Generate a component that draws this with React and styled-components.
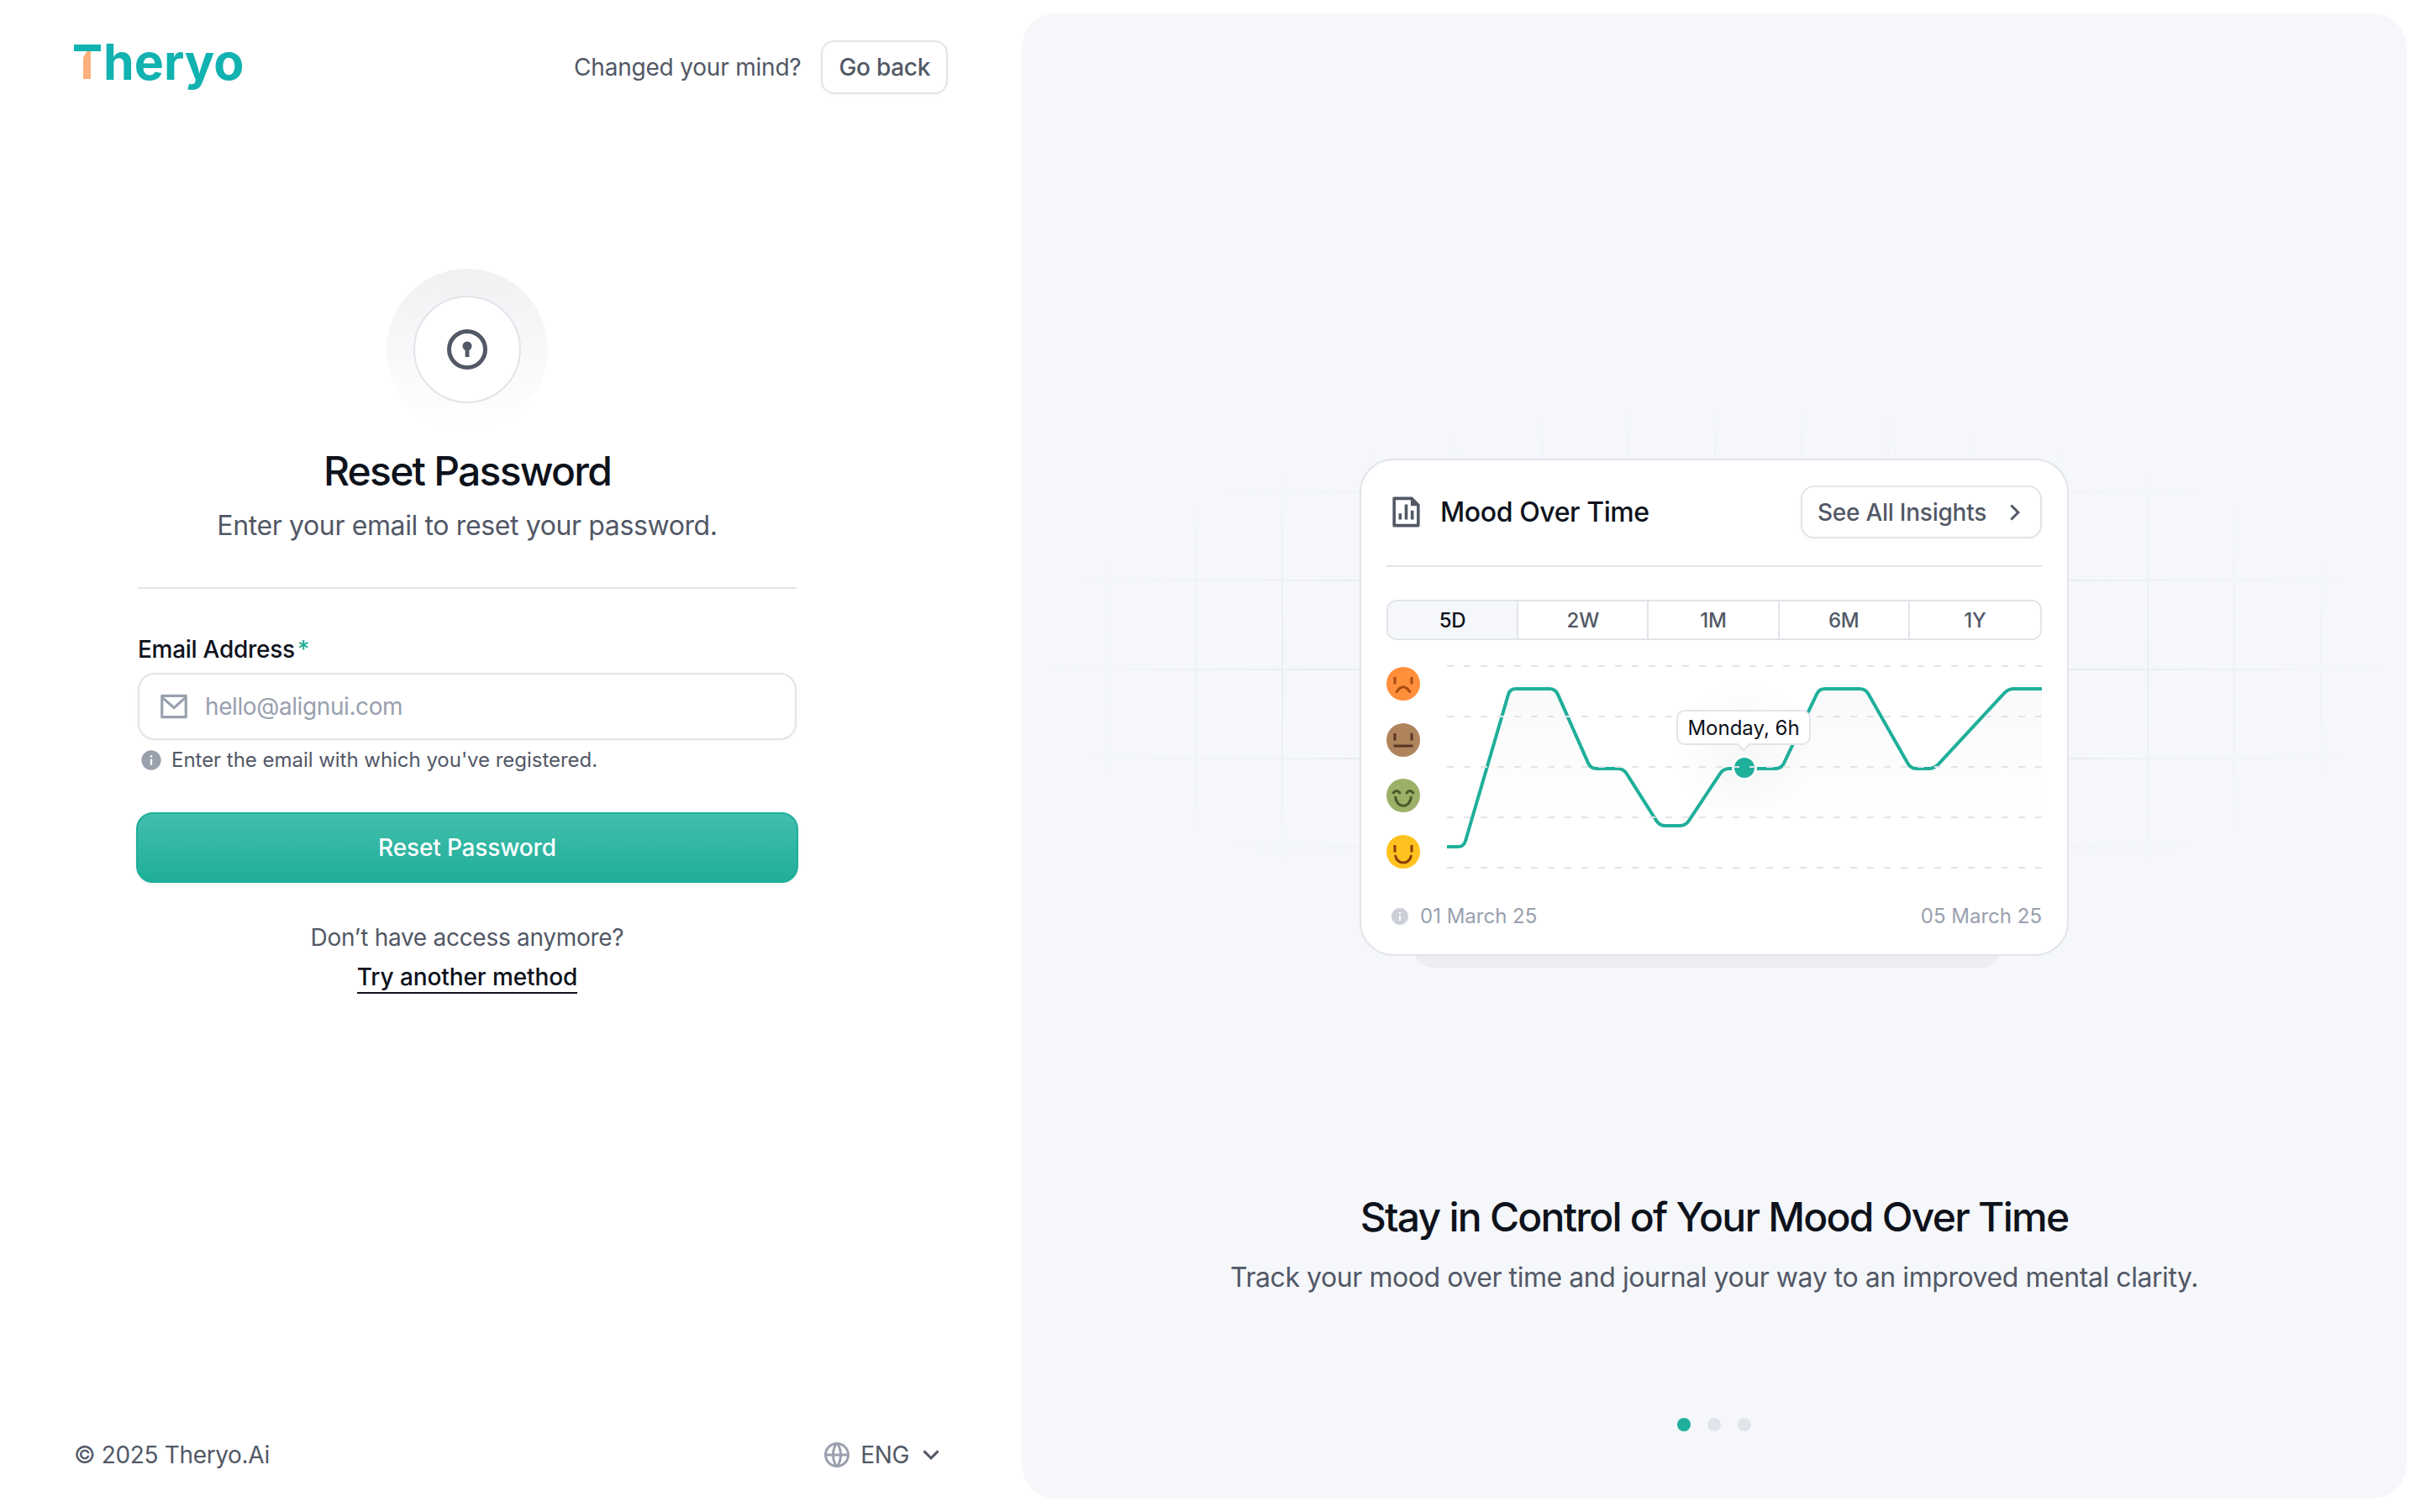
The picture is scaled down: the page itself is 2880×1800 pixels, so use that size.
import React from 'react'
import styled, { createGlobalStyle } from 'styled-components'
import {
  RiArrowDownSLine,
  RiArrowRightSLine,
  RiFileChartLine,
  RiGlobalLine,
  RiInformationFill,
  RiMailLine,
} from 'react-icons/ri'

const TEAL = '#1FAF9A'

const linePoints = [
  [1722, 1008], [1742, 1008], [1797, 820], [1851, 820], [1893, 915], [1932, 915],
  [1975, 983], [2006, 983], [2051, 915], [2120, 915], [2165, 820], [2220, 820],
  [2274, 915], [2302, 915], [2390, 820], [2430, 820],
]

// polyline with rounded corners
function roundedPath(points, r) {
  let d = `M${points[0][0]} ${points[0][1]}`
  for (let i = 1; i < points.length - 1; i++) {
    const [x, y] = points[i]
    const [px, py] = points[i - 1]
    const [nx, ny] = points[i + 1]
    const l1 = Math.hypot(x - px, y - py)
    const l2 = Math.hypot(nx - x, ny - y)
    const a = Math.min(r, l1 / 2) / l1
    const b = Math.min(r, l2 / 2) / l2
    d += ` L${x - (x - px) * a} ${y - (y - py) * a} Q${x} ${y} ${x + (nx - x) * b} ${y + (ny - y) * b}`
  }
  const last = points[points.length - 1]
  return `${d} L${last[0]} ${last[1]}`
}

const linePath = roundedPath(linePoints, 7)
const gridRows = [793, 853, 913, 973, 1033]

function Face({ bg, ink, children }) {
  return (
    <svg width='40' height='40' viewBox='0 0 40 40' fill='none' stroke={ink} strokeWidth='3'>
      <circle cx='20' cy='20' r='20' fill={bg} stroke='none' />
      {children}
    </svg>
  )
}

const Eyes = () => <path d='M10 12v8.5M30 12v8.5' />

export default function App() {
  return (
    <Page>
      <GlobalStyle />
      <LeftColumn>
        <TopBar>
          <Logo><LogoT>T</LogoT>heryo</Logo>
          <TopActions>
            <MutedText>Changed your mind?</MutedText>
            <GhostButton>Go back</GhostButton>
          </TopActions>
        </TopBar>

        <FormBlock>
          <IconHalo>
            <IconDisc>
              <svg width='48' height='48' viewBox='0 0 48 48' fill='none'>
                <circle cx='24' cy='24' r='21.5' stroke='#525866' strokeWidth='5' />
                <circle cx='24' cy='20' r='5.5' fill='#525866' />
                <rect x='21.6' y='21' width='4.8' height='12' fill='#525866' />
              </svg>
            </IconDisc>
          </IconHalo>
          <FormTitle>Reset Password</FormTitle>
          <FormSubtitle>Enter your email to reset your password.</FormSubtitle>
          <Rule />
          <FieldLabel>Email Address<Required>*</Required></FieldLabel>
          <InputBox>
            <RiMailLine size={38} color='#99A0AE' />
            <Placeholder>hello@alignui.com</Placeholder>
          </InputBox>
          <Hint>
            <RiInformationFill size={28} color='#99A0AE' />
            Enter the email with which you've registered.
          </Hint>
          <PrimaryButton>Reset Password</PrimaryButton>
          <AltText>Don’t have access anymore?</AltText>
          <AltLink>Try another method</AltLink>
        </FormBlock>

        <BottomBar>
          <FooterText>© 2025 Theryo.Ai</FooterText>
          <LangPicker>
            <RiGlobalLine size={36} color='#99A0AE' />
            <FooterText>ENG</FooterText>
            <LangChevron size={36} color='#525866' />
          </LangPicker>
        </BottomBar>
      </LeftColumn>

      <RightPanel>
        <Illustration>
          <GridBackdrop />
          <Card>
            <CardHeader>
              <CardTitle>
                <RiFileChartLine size={43} color='#525866' />
                Mood Over Time
              </CardTitle>
              <InsightsButton>
                See All Insights
                <RiArrowRightSLine size={36} color='#525866' />
              </InsightsButton>
            </CardHeader>
            <Tabs>
              {['5D', '2W', '1M', '6M', '1Y'].map((t, i) => (
                <Tab key={t} active={i === 0}>{t}</Tab>
              ))}
            </Tabs>
            <ChartRow>
              <Faces>
                <Face bg='#FF8F3B' ink='#A84A12'>
                  <Eyes />
                  <path d='M11.5 30.5Q20 17 28.5 30.5' />
                </Face>
                <Face bg='#AF845D' ink='#5A3325'>
                  <Eyes />
                  <path d='M8.5 27h23' />
                </Face>
                <Face bg='#9DB068' ink='#4A5A2A'>
                  <path d='M7.5 18Q12 11 16.5 18M23.5 18Q28 11 32.5 18' />
                  <path d='M10.5 21C12 36 28 36 29.5 21' />
                </Face>
                <Face bg='#FFC21F' ink='#8A3D0A'>
                  <Eyes />
                  <path d='M10.5 24C12 36 28 36 29.5 24' />
                </Face>
              </Faces>
              <ChartArea>
                <ChartSvg viewBox='1722 794 708 240' fill='none'>
                  <defs>
                    <linearGradient id='moodFill' x1='0' y1='0' x2='0' y2='1'>
                      <stop offset='0' stopColor='#F0F1F4' stopOpacity='0.4' />
                      <stop offset='0.85' stopColor='#F0F1F4' stopOpacity='0' />
                    </linearGradient>
                    <radialGradient id='dotGlow'>
                      <stop offset='0' stopColor='#0E121B' stopOpacity='0.035' />
                      <stop offset='1' stopColor='#0E121B' stopOpacity='0' />
                    </radialGradient>
                  </defs>
                  <path d={`${linePath} L2430 1000 L1722 1000 Z`} fill='url(#moodFill)' />
                  <circle cx='2076' cy='895' r='85' fill='url(#dotGlow)' />
                  <path d={linePath} stroke={TEAL} strokeWidth='4' />
                  <circle cx='2076' cy='914' r='15' fill='#fff' />
                  <circle cx='2076' cy='914' r='12' fill={TEAL} />
                  {gridRows.map(y => (
                    <path key={y} d={`M1722 ${y}H2430`} stroke='#E1E4EA' strokeWidth='2' strokeDasharray='8 12' />
                  ))}
                </ChartSvg>
                <ChartTooltip>Monday, 6h</ChartTooltip>
              </ChartArea>
            </ChartRow>
            <DateRow>
              <DateStart>
                <RiInformationFill size={24} color='#CACFD8' />
                01 March 25
              </DateStart>
              <span>05 March 25</span>
            </DateRow>
          </Card>
        </Illustration>
        <PanelTitle>Stay in Control of Your Mood Over Time</PanelTitle>
        <PanelText>Track your mood over time and journal your way to an improved mental clarity.</PanelText>
        <Dots>
          <Dot active />
          <Dot />
          <Dot />
        </Dots>
      </RightPanel>
    </Page>
  )
}

const GlobalStyle = createGlobalStyle`
  html, body {
    margin: 0;
    padding: 0;
    background: #fff;
    font-family: Inter, 'Liberation Sans', sans-serif;
    color: #0E121B;
  }
  svg {
    display: block;
    flex-shrink: 0;
  }
`

const Page = styled.div`
  display: flex;
  width: 2880px;
  height: 1800px;
  overflow: hidden;
`

const LeftColumn = styled.div`
  width: 1216px;
  flex-shrink: 0;
  display: flex;
  flex-direction: column;
  padding: 48px 88px 48px;
  box-sizing: border-box;
`

const TopBar = styled.header`
  display: flex;
  align-items: flex-start;
  justify-content: space-between;
  height: 64px;
`

const Logo = styled.div`
  font-size: 59px;
  font-weight: 700;
  line-height: 60px;
  color: #11B2B0;
  margin-top: -4px;
`

// the T is kept as text but painted by the two bars below
const LogoT = styled.span`
  position: relative;
  display: inline-block;
  width: 35px;
  color: transparent;

  &::before {
    content: '';
    position: absolute;
    left: 0;
    top: 9px;
    width: 32px;
    height: 8px;
    background: #11B2B0;
  }

  &::after {
    content: '';
    position: absolute;
    left: 11px;
    top: 17px;
    width: 9px;
    height: 33px;
    background: #FFB07C;
    clip-path: polygon(50% 0, 100% 0, 100% 100%, 0 100%, 0 22%);
  }
`

const TopActions = styled.div`
  display: flex;
  align-items: center;
  gap: 24px;
`

const MutedText = styled.span`
  font-size: 28px;
  line-height: 40px;
  letter-spacing: -0.2px;
  color: #525866;
`

const FooterText = styled(MutedText)`
  letter-spacing: -0.35px;
`

const GhostButton = styled.button`
  height: 64px;
  padding: 0 19px;
  border: 2px solid #E1E4EA;
  border-radius: 16px;
  background: #fff;
  box-shadow: 0 2px 4px rgba(14, 18, 27, 0.03);
  font: 500 28px/40px Inter, sans-serif;
  letter-spacing: -0.3px;
  color: #525866;
`

const FormBlock = styled.main`
  width: 784px;
  margin: 208px 0 0 76px;
  display: flex;
  flex-direction: column;
  align-items: center;
`

const IconHalo = styled.div`
  width: 192px;
  height: 192px;
  border-radius: 50%;
  display: flex;
  align-items: center;
  justify-content: center;
  background: linear-gradient(180deg, #F0F1F3 0%, rgba(240, 241, 243, 0) 100%);
`

const IconDisc = styled.div`
  width: 128px;
  height: 128px;
  box-sizing: border-box;
  border-radius: 50%;
  border: 2px solid #E1E4EA;
  background: #fff;
  display: flex;
  align-items: center;
  justify-content: center;
`

const FormTitle = styled.h1`
  margin: 17px 0 0;
  font-size: 48px;
  line-height: 64px;
  font-weight: 500;
  letter-spacing: -1.75px;
  color: #0E121B;
`

const FormSubtitle = styled.p`
  margin: 9px 0 0;
  font-size: 32px;
  line-height: 48px;
  letter-spacing: -0.38px;
  color: #525866;
`

const Rule = styled.hr`
  width: 100%;
  margin: 49px 0 0;
  border: 0;
  height: 2px;
  background: #E1E4EA;
`

const FieldLabel = styled.label`
  align-self: flex-start;
  margin-top: 52px;
  font-size: 28px;
  line-height: 40px;
  font-weight: 500;
  letter-spacing: -0.28px;
  color: #0E121B;
`

const Required = styled.span`
  color: ${TEAL};
  margin-left: 3px;
`

const InputBox = styled.div`
  width: 100%;
  height: 80px;
  margin-top: 8px;
  box-sizing: border-box;
  border: 2px solid #E1E4EA;
  border-radius: 20px;
  background: #fff;
  box-shadow: 0 2px 4px rgba(14, 18, 27, 0.03);
  display: flex;
  align-items: center;
  gap: 18px;
  padding: 0 22px;
`

const Placeholder = styled.span`
  font-size: 28px;
  line-height: 40px;
  letter-spacing: -0.4px;
  color: #99A0AE;
`

const Hint = styled.div`
  align-self: flex-start;
  display: flex;
  align-items: center;
  gap: 10px;
  margin: 8px 0 0 2px;
  font-size: 24px;
  line-height: 32px;
  letter-spacing: -0.03px;
  color: #525866;
`

const PrimaryButton = styled.button`
  width: 788px;
  height: 84px;
  margin-top: 46px;
  border: 2px solid #1DAF9A;
  border-radius: 20px;
  background: linear-gradient(180deg, #42BEAC 0%, #1FAE99 100%);
  box-shadow: 0 2px 4px rgba(14, 18, 27, 0.06);
  font: 500 28px/40px Inter, sans-serif;
  letter-spacing: -0.15px;
  color: #fff;
`

const AltText = styled.p`
  margin: 45px 0 0;
  font-size: 28px;
  line-height: 40px;
  letter-spacing: -0.28px;
  color: #525866;
`

const AltLink = styled.a`
  margin-top: 9px;
  font-size: 28px;
  line-height: 36px;
  font-weight: 500;
  letter-spacing: -0.1px;
  color: #0E121B;
  border-bottom: 2px solid #0E121B;
`

const BottomBar = styled.footer`
  margin-top: auto;
  display: flex;
  align-items: center;
  justify-content: space-between;
  height: 40px;
  padding-right: 2px;
`

const LangPicker = styled.div`
  display: flex;
  align-items: center;
  gap: 10px;
`

const LangChevron = styled(RiArrowDownSLine)`
  margin-left: -2px;
`

const RightPanel = styled.section`
  flex: 1;
  margin: 16px 16px 16px 0;
  padding-top: 530px;
  box-sizing: border-box;
  border-radius: 40px;
  background: #F5F7FA;
  display: flex;
  flex-direction: column;
  align-items: center;
`

const Illustration = styled.div`
  position: relative;
  width: 844px;
  height: 592px;

  &::after {
    content: '';
    position: absolute;
    left: 64px;
    right: 80px;
    bottom: -14px;
    height: 40px;
    border-radius: 0 0 24px 24px;
    background: #ECEEF2;
  }
`

const GridBackdrop = styled.div`
  position: absolute;
  left: -378px;
  top: -58px;
  width: 1600px;
  height: 614px;
  background-image:
    linear-gradient(90deg, #E9ECF1 2px, transparent 2px),
    linear-gradient(180deg, #E9ECF1 2px, transparent 2px);
  background-size: 103px 106px;
  background-position: 800px 96px;
  mask-image: radial-gradient(ellipse 50% 50% at 50% 50%, #000 60%, transparent 100%);
`

const Card = styled.div`
  position: relative;
  z-index: 1;
  width: 844px;
  height: 592px;
  box-sizing: border-box;
  padding: 30px 30px 0;
  border: 2px solid #E1E4EA;
  border-radius: 40px;
  background: #fff;
`

const CardHeader = styled.div`
  display: flex;
  align-items: center;
  justify-content: space-between;
  padding-bottom: 32px;
  border-bottom: 2px solid #E1E4EA;
`

const CardTitle = styled.div`
  display: flex;
  align-items: center;
  gap: 19px;
  font-size: 32px;
  line-height: 40px;
  font-weight: 500;
  letter-spacing: -0.4px;
  color: #0E121B;
  padding-left: 2px;
`

const InsightsButton = styled.button`
  width: 287px;
  height: 63px;
  box-sizing: border-box;
  padding: 0 12px 0 18px;
  border: 2px solid #E1E4EA;
  border-radius: 16px;
  background: #fff;
  box-shadow: 0 2px 4px rgba(14, 18, 27, 0.03);
  display: flex;
  align-items: center;
  justify-content: space-between;
  font: 500 28px/40px Inter, sans-serif;
  letter-spacing: -0.25px;
  color: #525866;
`

const Tabs = styled.div`
  margin-top: 39px;
  height: 48px;
  box-sizing: border-box;
  display: grid;
  grid-template-columns: repeat(5, 1fr);
  border: 2px solid #E1E4EA;
  border-radius: 12px;
  overflow: hidden;
`

const Tab = styled.div`
  display: flex;
  align-items: center;
  justify-content: center;
  font-size: 24px;
  font-weight: 500;
  letter-spacing: -0.2px;
  color: ${props => (props.active ? '#0E121B' : '#525866')};
  background: ${props => (props.active ? '#F5F7FA' : '#fff')};

  &:not(:last-child) {
    border-right: 2px solid #E1E4EA;
  }
`

const ChartRow = styled.div`
  margin-top: 32px;
  display: grid;
  grid-template-columns: 40px 708px;
  column-gap: 32px;
`

const Faces = styled.div`
  height: 240px;
  display: flex;
  flex-direction: column;
  justify-content: space-between;
`

const ChartArea = styled.div`
  position: relative;
  height: 240px;
`

const ChartSvg = styled.svg`
  width: 708px;
  height: 240px;
  overflow: visible;
`

const ChartTooltip = styled.div`
  position: absolute;
  left: 273px;
  top: 51px;
  width: 160px;
  height: 42px;
  box-sizing: border-box;
  display: flex;
  align-items: center;
  justify-content: center;
  border: 2px solid #E1E4EA;
  border-radius: 10px;
  background: #fff;
  font-size: 24px;
  color: #0E121B;

  &::after {
    content: '';
    position: absolute;
    left: 72px;
    bottom: -7px;
    width: 10px;
    height: 10px;
    background: #fff;
    border-right: 2px solid #E1E4EA;
    border-bottom: 2px solid #E1E4EA;
    transform: rotate(45deg);
  }
`

const DateRow = styled.div`
  margin-top: 41px;
  display: flex;
  align-items: center;
  justify-content: space-between;
  font-size: 24px;
  line-height: 32px;
  color: #99A0AE;
`

const DateStart = styled.div`
  display: flex;
  align-items: center;
  gap: 12px;
  padding-left: 4px;
`

const PanelTitle = styled.h2`
  margin: 279px 0 0;
  font-size: 48px;
  line-height: 64px;
  font-weight: 500;
  letter-spacing: -1.75px;
  color: #0E121B;
`

const PanelText = styled.p`
  margin: 20px 0 0;
  font-size: 32px;
  line-height: 40px;
  letter-spacing: -0.44px;
  color: #525866;
`

const Dots = styled.div`
  margin-top: 147px;
  display: flex;
  gap: 20px;
`

const Dot = styled.span`
  width: 16px;
  height: 16px;
  border-radius: 50%;
  background: ${props => (props.active ? TEAL : '#E1E4EA')};
`
